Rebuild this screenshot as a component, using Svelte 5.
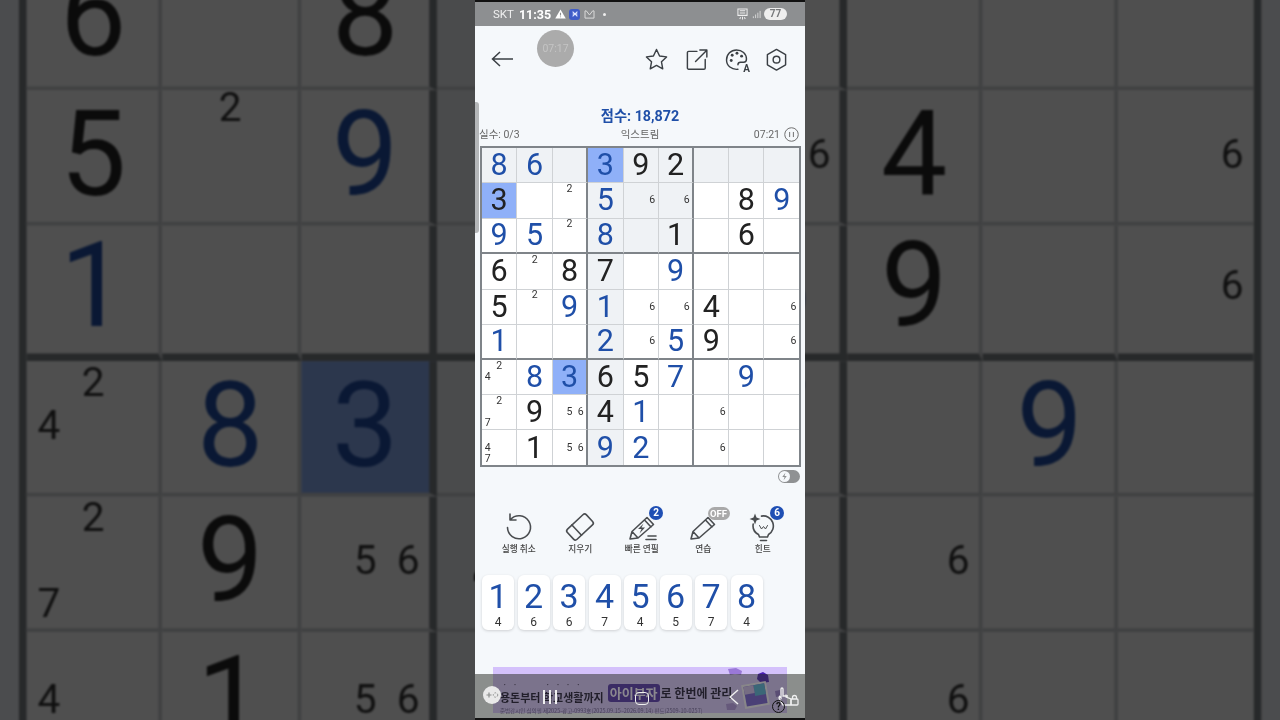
<script>
  // b = blue digit, k = black digit, n = pencil notes, * = blue highlight
  const rows = [
    ['b8', 'b6', '', 'b3*', 'k9', 'k2', '', '', ''],
    ['k3*', '', 'n2', 'b5', 'n6', 'n6', '', 'k8', 'b9'],
    ['b9', 'b5', 'n2', 'b8', '', 'k1', '', 'k6', ''],
    ['k6', 'n2', 'k8', 'k7', '', 'b9', '', '', ''],
    ['k5', 'n2', 'b9', 'b1', 'n6', 'n6', 'k4', '', 'n6'],
    ['b1', '', '', 'b2', 'n6', 'b5', 'k9', '', 'n6'],
    ['n24', 'b8', 'b3*', 'k6', 'k5', 'b7', '', 'b9', ''],
    ['n27', 'k9', 'n56', 'k4', 'b1', '', 'n6', '', ''],
    ['n47', 'k1', 'n56', 'b9', 'b2', '', 'n6', '', '']
  ]

  const cells = rows.flatMap((row, r) =>
    row.map((v, c) => ({
      kind: v[0] || '',
      value: v.replace('*', '').slice(1),
      picked: v.endsWith('*'),
      shade: r === 0 || c === 3 || (r < 3 && c > 2 && c < 6),
      thickRight: c === 2 || c === 5,
      thickBottom: r === 2 || r === 5,
      lastCol: c === 8,
      lastRow: r === 8
    }))
  )

  const pad = [
    [1, 4], [2, 6], [3, 6], [4, 7], [5, 4], [6, 5], [7, 7], [8, 4]
  ]
</script>

{#snippet board()}
  <div class="board">
    {#each cells as cell}
      <div
        class="cell"
        class:shade={cell.shade}
        class:picked={cell.picked}
        class:tr={cell.thickRight}
        class:tb={cell.thickBottom}
        class:lc={cell.lastCol}
        class:lr={cell.lastRow}
      >
        {#if cell.kind === 'n'}
          <div class="notes">
            {#each [1, 2, 3, 4, 5, 6, 7, 8, 9] as n}
              <span>{cell.value.includes(String(n)) ? n : ''}</span>
            {/each}
          </div>
        {:else if cell.kind}
          <span class="digit" class:blue={cell.kind === 'b'}>{cell.value}</span>
        {/if}
      </div>
    {/each}
  </div>
{/snippet}

{#snippet pencil()}
  <path d="M4 28 L6 20.5 L21 6.5 L27.500 13.500 L12 27 Z M6 20.5 L12 27 M18.500 9 L25 16" />
{/snippet}

<div class="stage">
  <div class="backdrop">{@render board()}</div>

  <main class="phone">
    <div class="status">
      <span class="carrier">SKT</span>
      <b class="clock">11:35</b>
      <svg class="st-alert" viewBox="0 0 12 11"><path d="M6 0.5 L11.8 10.5 H0.2 Z" fill="#fff" /><path d="M6 4v3.2M6 8.2v1" stroke="#8d8f91" stroke-width="1.2" /></svg>
      <span class="st-app"><svg viewBox="0 0 10 10"><path d="M2 2l6 6M8 2l-6 6M2 5h6" stroke="#dfe6ff" stroke-width="1.4" fill="none" /></svg></span>
      <svg class="st-mail" viewBox="0 0 12 10"><path d="M1 9V1h1.500L6 5.500 9.500 1H11v8H1" fill="none" stroke="#dcdcdc" stroke-width="1.1" /></svg>
      <span class="st-dot"></span>
      <span class="grow"></span>
      <svg class="st-wifi" viewBox="0 0 12 13"><path d="M1 1h10v7H1zM3 3h6M3 5.5h6M4 10l-1 2M6 9.5v3M8 10l1 2" fill="none" stroke="#eee" stroke-width="1.1" /></svg>
      <svg class="st-signal" viewBox="0 0 10 10"><path d="M1.5 9V7M4 9V5M6.5 9V3M9 9V1" stroke="#ddd" stroke-width="1" /></svg>
      <span class="battery">77</span>
    </div>

    <header class="topbar">
      <svg class="back" viewBox="0 0 22 18" aria-hidden="true"><path d="M22 9H1.500M9 2 1.500 9 9 16" /></svg>
      <span class="grow"></span>
      <svg class="tb-icon" viewBox="0 0 24 24" aria-hidden="true"><path d="M12 1.500l3.200 6.800 7.300 1-5.300 5.100 1.300 7.300-6.500-3.500-6.500 3.500 1.300-7.300L1.500 9.300l7.300-1z" /></svg>
      <svg class="tb-icon" viewBox="0 0 24 24" aria-hidden="true"><path d="M12.5 3.5H3.8a1.3 1.3 0 0 0-1.3 1.3v16a1.3 1.3 0 0 0 1.3 1.3h16a1.3 1.3 0 0 0 1.3-1.3V12M11 14 22.5 2.5M15.5 2h7.3v7.3" /></svg>
      <span class="palette">
        <svg class="tb-icon" viewBox="0 0 24 24" aria-hidden="true">
          <path d="M13.5 22.2C7 23 1.6 18.5 1.6 12.4 1.6 6.6 6.2 2 12 2c5.800 0 10.400 4 10.400 9.400 0 2.400-1.400 3.400-3 3.400h-3.200c-1.800 0-2.700 1.300-2.700 2.700" />
          <g class="dots"><circle cx="6.500" cy="13" r="1.500" /><circle cx="7.500" cy="7.500" r="1.500" /><circle cx="12.500" cy="5.500" r="1.500" /><circle cx="17.300" cy="8.500" r="1.500" /></g>
        </svg>
        <b>A</b>
      </span>
      <svg class="tb-icon" viewBox="0 0 24 24" aria-hidden="true"><path d="M12 1.500 21.500 7v10.500L12 23l-9.500-5.500V7z" /><circle cx="12" cy="12.200" r="3.500" /></svg>
    </header>
    <div class="bubble">07:17</div>
    <div class="handle"></div>

    <div class="score">점수: 18,872</div>
    <div class="info">
      <span>실수: 0/3</span>
      <span class="level">익스트림</span>
      <span class="time">07:21</span>
      <svg class="pause" viewBox="0 0 16 16"><circle cx="8" cy="8" r="7.200" /><path d="M6 5.300v5.400M10 5.300v5.400" /></svg>
    </div>

    <div class="board-wrap">{@render board()}</div>

    <div class="toggle-row">
      <span class="toggle">
        <span class="knob">
          <svg viewBox="0 0 10 10"><path d="M6 0.800 2.500 5.600H5L4 9.200 7.500 4.400H5z" fill="#8f9193" /></svg>
        </span>
      </span>
    </div>

    <div class="tools">
      <div class="tool">
        <svg viewBox="0 0 32 32" aria-hidden="true"><path d="M7.500 8.500A11.500 11.500 0 1 1 4.500 16.500M7 3v6h6" /></svg>
        <span>실행 취소</span>
      </div>
      <div class="tool">
        <svg viewBox="0 0 32 32" aria-hidden="true">
          <g transform="rotate(-43 16 16)"><rect x="3" y="9" width="26" height="14" rx="2.500" /><path d="M11.500 9v14" /></g>
        </svg>
        <span>지우기</span>
      </div>
      <div class="tool">
        <svg viewBox="0 0 32 32" aria-hidden="true">
          {@render pencil()}
          <path class="fill" d="M17.500 12.500 12 18h3.500l-2 4.500 5.500-6h-3.500z" />
          <path d="M22 25h8M20 28.500h10" />
        </svg>
        <span>빠른 연필</span>
        <i class="badge">2</i>
      </div>
      <div class="tool">
        <svg viewBox="0 0 32 32" aria-hidden="true">{@render pencil()}</svg>
        <span>연습</span>
        <i class="badge off">OFF</i>
      </div>
      <div class="tool">
        <svg viewBox="0 0 32 32" aria-hidden="true">
          <path d="M14.500 5.100A10 10 0 0 1 21.500 23.500l-1 2.500h-8l-1-2.500A10 10 0 0 1 6.200 13M13.500 29.500h6" />
          <path class="fill" d="M8 2.500 9.500 6.500 13.500 8 9.500 9.500 8 13.500 6.500 9.500 2.500 8 6.500 6.500z" />
          <path class="thin" d="M12.500 14.500 14.500 18 16.500 15.500 18.500 18 20.500 14.500" />
        </svg>
        <span>힌트</span>
        <i class="badge">6</i>
      </div>
    </div>

    <div class="pad">
      {#each pad as [num, left]}
        <div class="key">
          <span class="key-num">{num}</span>
          <span class="key-left">{left}</span>
        </div>
      {/each}
    </div>

    <div class="ad">
      <div class="ad-text">
        <div class="ad-title">
          <span class="ad-lead"><span class="em">용돈</span>부터 <span class="em">학교생활</span>까지</span>
          <span class="ad-pill">아이부자</span>
          <span>로 한번에 관리</span>
        </div>
        <div class="ad-small">준법감시인 심의필 제2025-광고-0993호(2025.09.15~2026.09.14) 펀드(2509-10-0257)</div>
      </div>
      <svg class="ad-art" viewBox="0 0 57 46" aria-hidden="true">
        <path d="M3 2l8-1 6 3-1 4-6-1-5 1z" fill="#9a78d8" />
        <path d="M33 7l5-2 5 3 1 7-8 1-4-4z" fill="#4a1fb5" />
        <g transform="rotate(-10 30 28)">
          <rect x="18" y="16" width="25" height="24" fill="#efe9f5" />
          <rect x="20" y="18" width="21" height="20" fill="#6d55cc" />
          <path d="M30 18h11v11H30z" fill="#4fa8d0" />
          <path d="M20 18h10v8H20z" fill="#c9b4e8" />
        </g>
        <path d="M1 37l7-1 4 3-2 4-8 0z" fill="#a78ad8" />
        <path d="M50 24l5-1 1 6-5 1z" fill="#8f72c8" />
      </svg>
    </div>

    <div class="nav">
      <span class="gamepad">
        <svg viewBox="0 0 18 18"><path d="M3.500 9h5M6 6.500v5" stroke="#8b8d8c" stroke-width="1.200" /><circle cx="12.500" cy="9" r="2.200" fill="none" stroke="#8b8d8c" stroke-width="1" stroke-dasharray="1.500 1.300" /></svg>
      </span>
      <span class="nav-recent"><i></i><i></i><i></i></span>
      <span class="nav-home"></span>
      <svg class="nav-back" viewBox="0 0 10 16"><path d="M9 1 1 8l8 7" /></svg>
      <svg class="nav-hand" viewBox="0 0 22 22">
        <path d="M3 3v9l-1.500-1.500L1 12l4 7h8v-6l-5-2V8.500M3 3a1 1 0 0 1 2 0v7h5" />
        <rect x="13" y="13" width="7" height="6" rx="1" />
        <path d="M14.500 13v-1.500a2 2 0 0 1 4 0V13" />
      </svg>
      <span class="nav-help">?</span>
    </div>
  </main>
</div>

<style>
  :global(body) {
    margin: 0;
    background: #4b4c4e;
  }
  .stage {
    position: relative;
    display: flex;
    justify-content: center;
    width: 1280px;
    height: 720px;
    overflow: hidden;
    background: #4b4c4e;
    font-family: Roboto, 'Noto Sans CJK KR', sans-serif;
  }
  /* zoomed, dimmed copy of the board behind the phone */
  .backdrop {
    position: absolute;
    left: 18.500px;
    top: -467px;
    transform: scale(3.87);
    transform-origin: 0 0;
    filter: brightness(0.31) blur(0.3px);
  }
  .phone {
    position: relative;
    display: flex;
    flex-direction: column;
    flex: none;
    width: 330px;
    height: 720px;
    padding-top: 2px;
    box-sizing: border-box;
    overflow: hidden;
    background: #f5f8fb;
    filter: blur(0.35px);
  }
  .phone::before,
  .phone::after {
    content: '';
    position: absolute;
    left: 0;
    right: 0;
    height: 2px;
    background: #111;
  }
  .phone::before {
    top: 0;
  }
  .phone::after {
    bottom: 0;
  }
  .grow {
    flex: 1;
  }

  .status {
    display: flex;
    align-items: center;
    flex: none;
    height: 24px;
    padding: 0 18px;
    background: #8d8f91;
    color: #f0f0f0;
    font-size: 11.500px;
  }
  .clock {
    margin-left: 5px;
    font-size: 12.500px;
    color: #fff;
  }
  .st-alert {
    width: 11px;
    height: 10px;
    margin-left: 4px;
  }
  .st-app {
    display: flex;
    align-items: center;
    justify-content: center;
    width: 11px;
    height: 11px;
    margin-left: 3px;
    border-radius: 3px;
    background: #3f5cc8;
  }
  .st-app svg {
    width: 8px;
    height: 8px;
  }
  .st-mail {
    width: 11px;
    height: 9px;
    margin-left: 4px;
  }
  .st-dot {
    width: 3px;
    height: 3px;
    margin-left: 8px;
    border-radius: 50%;
    background: #eee;
  }
  .st-wifi {
    width: 11px;
    height: 12px;
  }
  .st-signal {
    width: 9px;
    height: 9px;
    margin-left: 4px;
    margin-right: 3px;
  }
  .battery {
    width: 23px;
    height: 12px;
    border-radius: 6px;
    background: #eee;
    color: #77797b;
    font-size: 10px;
    font-weight: 700;
    line-height: 12px;
    text-align: center;
  }

  .topbar {
    display: flex;
    align-items: center;
    flex: none;
    gap: 17px;
    height: 66px;
    padding: 0 17px 0 16px;
    box-sizing: border-box;
  }
  .back {
    width: 22px;
    height: 18px;
    fill: none;
    stroke: #3a3f44;
    stroke-width: 1.500;
  }
  .tb-icon {
    display: block;
    width: 23px;
    height: 23px;
    fill: none;
    stroke: #3a3f44;
    stroke-width: 1.500;
    stroke-linejoin: round;
    stroke-linecap: round;
  }
  .dots {
    fill: #3a3f44;
    stroke: none;
  }
  .palette {
    position: relative;
    display: block;
  }
  .palette b {
    position: absolute;
    right: -2px;
    bottom: -3px;
    padding-left: 1px;
    background: #f5f8fb;
    color: #3a3f44;
    font-size: 10px;
    line-height: 10px;
  }
  .bubble {
    position: absolute;
    left: 62px;
    top: 30px;
    width: 37px;
    height: 37px;
    border-radius: 50%;
    background: #ababab;
    color: #c4c4c4;
    font-size: 10.500px;
    line-height: 37px;
    text-align: center;
  }
  .handle {
    position: absolute;
    left: 0;
    top: 102px;
    width: 4px;
    height: 131px;
    border-radius: 0 3px 3px 0;
    background: #b4b6b8;
  }

  .score {
    flex: none;
    margin-top: 13px;
    color: #1f4fa8;
    font-size: 14.300px;
    font-weight: 700;
    line-height: 22px;
    text-align: center;
  }
  .info {
    position: relative;
    display: flex;
    align-items: center;
    flex: none;
    height: 14px;
    padding: 0 6px 0 4px;
    color: #666;
    font-size: 10.500px;
    line-height: 14px;
  }
  .info span {
    padding-top: 2px;
  }
  .level {
    position: absolute;
    left: 0;
    right: 0;
    text-align: center;
  }
  .time {
    margin-left: auto;
    margin-right: 4px;
  }
  .pause {
    width: 15px;
    height: 15px;
    fill: none;
    stroke: #666;
    stroke-width: 1;
  }

  .board-wrap {
    flex: none;
    margin: 5px 0 0 5px;
  }
  .board {
    display: grid;
    grid-template-columns: repeat(6, 35.400px) repeat(3, 35px);
    grid-template-rows: repeat(6, 35.400px) repeat(3, 35px);
    width: max-content;
    border: 2px solid #7f8489;
    background: #fff;
    font-family: Roboto, sans-serif;
  }
  .cell {
    display: flex;
    align-items: center;
    justify-content: center;
    min-width: 0;
    min-height: 0;
    box-sizing: border-box;
    border-right: 1px solid #cfd2d5;
    border-bottom: 1px solid #cfd2d5;
    background: #fff;
  }
  .cell.shade {
    background: #eff2f5;
  }
  .cell.picked {
    background: #8fb0f8;
  }
  .cell.tr {
    border-right: 2px solid #7f8489;
  }
  .cell.tb {
    border-bottom: 2px solid #7f8489;
  }
  .cell.lc {
    border-right: 0;
  }
  .cell.lr {
    border-bottom: 0;
  }
  .digit {
    color: #222;
    font-size: 30.500px;
    line-height: 1;
  }
  .digit.blue {
    color: #1f4fa8;
  }
  .notes {
    display: grid;
    grid-template-columns: repeat(3, 1fr);
    grid-template-rows: repeat(3, 1fr);
    width: 100%;
    height: 100%;
    color: #333;
    font-size: 10.500px;
    line-height: 1;
    text-align: center;
  }
  .notes span {
    align-self: center;
  }

  .toggle-row {
    display: flex;
    justify-content: flex-end;
    flex: none;
    height: 13px;
    margin-top: 3px;
    padding-right: 5px;
  }
  .toggle {
    display: block;
    width: 22px;
    height: 13px;
    border-radius: 7px;
    background: #8f9193;
  }
  .knob {
    display: flex;
    align-items: center;
    justify-content: center;
    width: 11px;
    height: 11px;
    margin: 1px;
    border-radius: 50%;
    background: #f5f8fb;
  }
  .knob svg {
    width: 9px;
    height: 9px;
  }

  .tools {
    display: flex;
    flex: none;
    margin-top: 28px;
    padding-left: 13px;
  }
  .tool {
    position: relative;
    display: flex;
    flex-direction: column;
    align-items: center;
    width: 61.500px;
  }
  .tool:last-child {
    margin-left: -2px;
  }
  .tool svg {
    width: 32px;
    height: 32px;
    fill: none;
    stroke: #4a4d50;
    stroke-width: 1.600;
    stroke-linecap: round;
    stroke-linejoin: round;
  }
  .tool .fill {
    fill: #4a4d50;
    stroke: none;
  }
  .tool .thin {
    stroke-width: 1;
  }
  .tool span {
    color: #444;
    font-size: 8.700px;
    font-weight: 500;
    line-height: 12px;
    white-space: nowrap;
  }
  .badge {
    position: absolute;
    left: 38px;
    top: -5px;
    width: 14px;
    height: 14px;
    border-radius: 50%;
    background: #1f4fb4;
    color: #fff;
    font-size: 10px;
    font-style: normal;
    font-weight: 700;
    line-height: 14px;
    text-align: center;
  }
  .badge.off {
    left: 35px;
    top: -4px;
    width: 22px;
    height: 13px;
    border-radius: 7px;
    background: #a9a9a9;
    font-size: 9.500px;
    line-height: 13px;
  }

  .pad {
    display: flex;
    flex: none;
    gap: 3.500px;
    margin-top: 20px;
    padding-left: 7px;
  }
  .key {
    display: flex;
    flex-direction: column;
    align-items: center;
    width: 32px;
    height: 55px;
    box-sizing: border-box;
    padding-top: 3px;
    border-radius: 6px;
    background: #fff;
    box-shadow: 0 1px 3px rgba(0, 0, 0, 0.16);
  }
  .key-num {
    color: #1f4fa8;
    font-size: 34px;
    line-height: 36px;
  }
  .key-left {
    margin-top: 1px;
    color: #333;
    font-size: 12px;
    line-height: 14px;
  }

  .ad {
    position: relative;
    flex: none;
    height: 46px;
    margin: 37px 18px 0;
    background: #d4c1fb;
  }
  .ad-text {
    padding: 13px 0 0 7px;
  }
  .ad-title {
    display: flex;
    align-items: center;
    color: #17102f;
    font-family: 'Noto Sans CJK KR', sans-serif;
    font-size: 12px;
    font-weight: 700;
    line-height: 18px;
    white-space: pre;
  }
  .ad-lead {
    font-size: 11px;
  }
  .em {
    text-emphasis: '·';
    text-emphasis-position: over;
  }
  .ad-pill {
    margin: 0 1px 0 4px;
    padding: 0 2px;
    border-radius: 3px;
    background: #4d2aa8;
    color: #f2ebff;
    font-size: 13px;
  }
  .ad-small {
    margin-top: 1px;
    color: #6a5a92;
    font-family: 'Noto Sans CJK KR', sans-serif;
    font-size: 5.500px;
    line-height: 9px;
    white-space: nowrap;
  }
  .ad-art {
    position: absolute;
    right: 5px;
    top: 0;
    width: 57px;
    height: 46px;
  }

  .nav {
    position: absolute;
    left: 0;
    right: 0;
    bottom: 2px;
    height: 44px;
    background: rgba(42, 44, 38, 0.52);
  }
  .gamepad {
    position: absolute;
    left: 8px;
    top: 12px;
    width: 18px;
    height: 18px;
    border-radius: 50%;
    background: #e9e9e9;
  }
  .gamepad svg {
    display: block;
    width: 18px;
    height: 18px;
  }
  .nav-recent {
    position: absolute;
    left: 68px;
    top: 16px;
    display: flex;
    gap: 4.500px;
  }
  .nav-recent i {
    width: 1.500px;
    height: 14px;
    background: #f0f0f0;
  }
  .nav-home {
    position: absolute;
    left: 160px;
    top: 18px;
    width: 12px;
    height: 11px;
    border: 1.500px solid #f0f0f0;
    border-radius: 4px;
  }
  .nav-back {
    position: absolute;
    left: 254px;
    top: 15px;
    width: 10px;
    height: 16px;
    fill: none;
    stroke: #f0f0f0;
    stroke-width: 1.500;
  }
  .nav-hand {
    position: absolute;
    left: 303px;
    top: 12px;
    width: 22px;
    height: 22px;
    fill: none;
    stroke: #f0f0f0;
    stroke-width: 1.300;
  }
  .nav-help {
    position: absolute;
    left: 297px;
    top: 26px;
    width: 11px;
    height: 11px;
    border: 1.500px solid #111;
    border-radius: 50%;
    color: #111;
    font-size: 10px;
    font-weight: 700;
    line-height: 11px;
    text-align: center;
  }
</style>
